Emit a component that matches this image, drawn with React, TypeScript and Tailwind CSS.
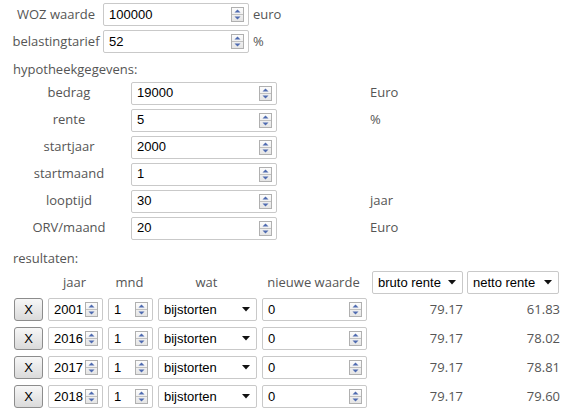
import React from "react";

const label = "font-['Open_Sans',sans-serif] text-[13px] text-[#555]";
const field = "font-['Liberation_Sans',Arial,sans-serif] text-[13px] text-black";

// small up/down spinner like the old browser number input
function Spin() {
  return (
    <svg width="13" height="15" viewBox="0 0 13 15" className="shrink-0">
      <defs>
        <linearGradient id="sg" x1="0" y1="0" x2="0" y2="1">
          <stop offset="0" stopColor="#fdfdfd" />
          <stop offset="1" stopColor="#e4e4e4" />
        </linearGradient>
      </defs>
      <rect x="0.5" y="0.5" width="12" height="14" fill="url(#sg)" stroke="#b0b0b0" />
      <line x1="1" y1="7.5" x2="12" y2="7.5" stroke="#c0c0c0" />
      <path d="M3.5 5.5 L6.5 2.5 L9.5 5.5 Z" fill="#4f6bb0" />
      <path d="M3.5 9.5 L9.5 9.5 L6.5 12.5 Z" fill="#4f6bb0" />
    </svg>
  );
}

function NumBox({ value, w }: { value: string; w: string }) {
  return (
    <div
      className={`${w} h-[23px] flex items-center justify-between border border-[#c9c9c9] rounded-[2px] bg-white pl-[5px] pr-[4px] ${field}`}
    >
      <span>{value}</span>
      <Spin />
    </div>
  );
}

function Dropdown({ value, w }: { value: string; w: string }) {
  return (
    <div
      className={`${w} h-[23px] flex items-center justify-between border border-[#c9c9c9] rounded-[2px] bg-white pl-[5px] pr-[6px] ${field}`}
    >
      <span>{value}</span>
      <svg width="8" height="5" viewBox="0 0 8 5">
        <path d="M0 0 L8 0 L4 4.5 Z" fill="#111" />
      </svg>
    </div>
  );
}

export default function App() {
  const hypotheek = [
    { name: "bedrag", value: "19000", unit: "Euro" },
    { name: "rente", value: "5", unit: "%" },
    { name: "startjaar", value: "2000", unit: "" },
    { name: "startmaand", value: "1", unit: "" },
    { name: "looptijd", value: "30", unit: "jaar" },
    { name: "ORV/maand", value: "20", unit: "Euro" },
  ];
  const rows = [
    { jaar: "2001", bruto: "79.17", netto: "61.83" },
    { jaar: "2016", bruto: "79.17", netto: "78.02" },
    { jaar: "2017", bruto: "79.17", netto: "78.81" },
    { jaar: "2018", bruto: "79.17", netto: "79.60" },
  ];

  return (
    <div className="w-[569px] h-[410px] bg-white pl-[12px] pt-[3px] overflow-hidden">
      {/* top settings */}
      <div className="flex flex-col gap-[4px]">
        <div className="flex items-center">
          <div className={`w-[88px] text-center ${label}`}>WOZ waarde</div>
          <div className="ml-[3px]">
            <NumBox value="100000" w="w-[146px]" />
          </div>
          <div className={`ml-[4px] ${label}`}>euro</div>
        </div>
        <div className="flex items-center">
          <div className={`w-[88px] text-center ${label}`}>belastingtarief</div>
          <div className="ml-[3px]">
            <NumBox value="52" w="w-[146px]" />
          </div>
          <div className={`ml-[4px] ${label}`}>%</div>
        </div>
      </div>

      <div className={`mt-[7px] pl-[1px] ${label}`}>hypotheekgegevens:</div>

      {/* mortgage data */}
      <div className="mt-[2px] flex flex-col gap-[4px]">
        {hypotheek.map((h) => (
          <div key={h.name} className="flex items-center">
            <div className={`w-[114px] text-center ${label}`}>{h.name}</div>
            <div className="ml-[5px]">
              <NumBox value={h.value} w="w-[146px]" />
            </div>
            <div className={`ml-[93px] ${label}`}>{h.unit}</div>
          </div>
        ))}
      </div>

      <div className={`mt-[9px] pl-[1px] ${label}`}>resultaten:</div>

      {/* results table */}
      <div className="mt-[3px] flex items-center">
        <div className="w-[35px]" />
        <div className={`w-[55px] text-center ${label}`}>jaar</div>
        <div className={`ml-[5px] w-[45px] text-center ${label}`}>mnd</div>
        <div className={`ml-[5px] w-[99px] text-center ${label}`}>wat</div>
        <div className={`ml-[5px] w-[105px] text-center ${label}`}>nieuwe waarde</div>
        <div className="ml-[6px]">
          <Dropdown value="bruto rente" w="w-[91px]" />
        </div>
        <div className="ml-[4px]">
          <Dropdown value="netto rente" w="w-[92px]" />
        </div>
      </div>

      <div className="mt-[4px] flex flex-col gap-[6px]">
        {rows.map((r) => (
          <div key={r.jaar} className="flex items-center">
            <button
              className={`ml-[2px] w-[29px] h-[23px] border border-[#8c8c8c] rounded-[3px] bg-gradient-to-b from-[#f7f7f7] to-[#dadada] ${field}`}
            >
              X
            </button>
            <div className="ml-[5px]">
              <NumBox value={r.jaar} w="w-[55px]" />
            </div>
            <div className="ml-[5px]">
              <NumBox value="1" w="w-[45px]" />
            </div>
            <div className="ml-[5px]">
              <Dropdown value="bijstorten" w="w-[99px]" />
            </div>
            <div className="ml-[5px]">
              <NumBox value="0" w="w-[105px]" />
            </div>
            <div className={`ml-[6px] w-[90px] text-right ${label}`}>{r.bruto}</div>
            <div className={`ml-[5px] w-[92px] text-right ${label}`}>{r.netto}</div>
          </div>
        ))}
      </div>
    </div>
  );
}
